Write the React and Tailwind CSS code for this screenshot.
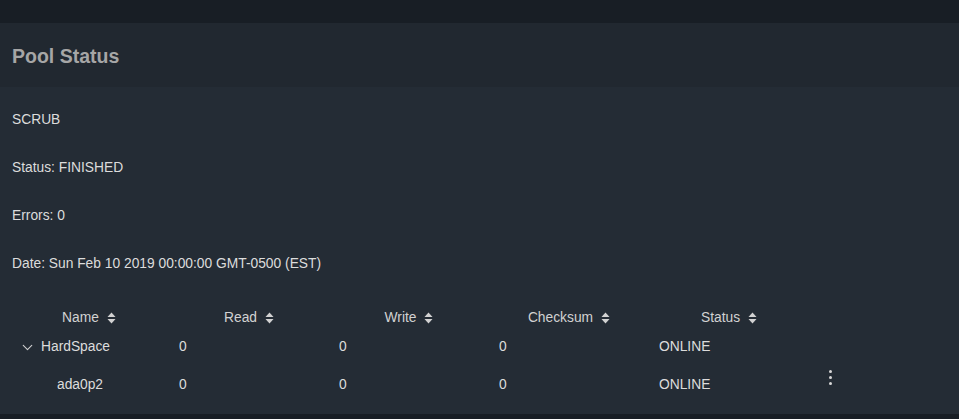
import { ChevronDown } from 'lucide-react';

const font = { fontFamily: '"Liberation Sans", Arial, sans-serif' };

function SortIcon() {
  return (
    <svg width="9" height="12" viewBox="0 0 9 12" className="inline-block ml-2 -mt-px">
      <path d="M4.5 0.5 L8.5 5 H0.5 Z" fill="currentColor" />
      <path d="M4.5 11.5 L8.5 7 H0.5 Z" fill="currentColor" />
    </svg>
  );
}

function Dots() {
  return (
    <div className="flex flex-col items-center gap-[3px]">
      <span className="w-[3px] h-[3px] rounded-full bg-[#d8d8d8]" />
      <span className="w-[3px] h-[3px] rounded-full bg-[#d8d8d8]" />
      <span className="w-[3px] h-[3px] rounded-full bg-[#d8d8d8]" />
    </div>
  );
}

const cols = ['Name', 'Read', 'Write', 'Checksum', 'Status'];

export default function App() {
  return (
    <div className="w-[959px] h-[419px] bg-[#181e25] flex flex-col overflow-hidden" style={font}>
      <div className="h-[23px] shrink-0" />
      <div className="h-[64px] shrink-0 bg-[#212830] flex items-center px-3 pt-[3px]">
        <h2 className="text-[19.5px] font-bold text-[#a6a6a6]">Pool Status</h2>
      </div>
      <div className="h-[327px] shrink-0 bg-[#242c35] px-3 pt-[25px] text-[13.8px] text-[#dcdcdc]">
        <p className="h-[48px] leading-[16px]">SCRUB</p>
        <p className="h-[48px] leading-[16px]">Status: FINISHED</p>
        <p className="h-[48px] leading-[16px]">Errors: 0</p>
        <p className="h-[48px] leading-[16px]">Date: Sun Feb 10 2019 00:00:00 GMT-0500 (EST)</p>

        <table className="-ml-[3px] border-collapse">
          <thead>
            <tr className="h-[28px] text-[#d2d2d2]">
              {cols.map((c) => (
                <th key={c} className="w-[160px] px-[10px] font-normal text-center">
                  {c}
                  <SortIcon />
                </th>
              ))}
              <th className="w-[42px]" />
            </tr>
          </thead>
          <tbody>
            <tr className="h-[30px]">
              <td className="px-[10px]">
                <div className="flex items-center gap-[5px]">
                  <ChevronDown size={17} strokeWidth={1.6} className="text-[#cfcfcf] shrink-0" />
                  <span>HardSpace</span>
                </div>
              </td>
              <td className="px-[10px]">0</td>
              <td className="px-[10px]">0</td>
              <td className="px-[10px]">0</td>
              <td className="px-[10px]">ONLINE</td>
              <td />
            </tr>
            <tr className="h-[46px]">
              <td className="px-[10px] pl-[48px]">ada0p2</td>
              <td className="px-[10px]">0</td>
              <td className="px-[10px]">0</td>
              <td className="px-[10px]">0</td>
              <td className="px-[10px]">ONLINE</td>
              <td className="align-middle">
                <div className="-mt-[15px] flex justify-center">
                  <Dots />
                </div>
              </td>
            </tr>
          </tbody>
        </table>
      </div>
    </div>
  );
}
